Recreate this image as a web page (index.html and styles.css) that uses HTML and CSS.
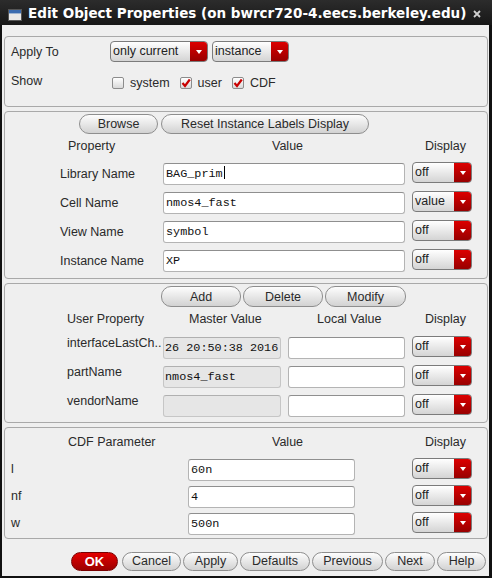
FILE: index.html
```html
<!DOCTYPE html>
<html>
<head>
<meta charset="utf-8">
<link rel="stylesheet" href="styles.css">
</head>
<body>
<div class="window">
  <div class="titlebar">
    <svg class="appicon" width="14" height="12" viewBox="0 0 14 12">
      <rect x="0.5" y="0.5" width="13" height="11" fill="#e8e8e8" stroke="#555"/>
      <rect x="1" y="1" width="12" height="3" fill="#3a6bb0"/>
      <rect x="1" y="4" width="12" height="1" fill="#9fb4d0"/>
    </svg>
    <span class="title">Edit Object Properties (on bwrcr720-4.eecs.berkeley.edu)</span>
    <svg class="close" width="8" height="8" viewBox="0 0 8 8">
      <path d="M1 1 L7 7 M7 1 L1 7" stroke="#d0d0d0" stroke-width="1.8"/>
    </svg>
  </div>
  <div class="content">
    <section class="group apply">
      <div class="arow">
        <span class="alabel">Apply To</span>
        <div class="combo w-current"><span class="ctext">only current</span><span class="carrow"></span></div>
        <div class="combo w-instance"><span class="ctext">instance</span><span class="carrow"></span></div>
      </div>
      <div class="arow showrow">
        <span class="alabel">Show</span>
        <span class="chk"><span class="box"></span>system</span>
        <span class="chk"><span class="box on"><svg width="10" height="10" viewBox="0 0 10 10"><path d="M1.5 5 L4 8 L8.8 1.5" fill="none" stroke="#c80000" stroke-width="2.2"/></svg></span>user</span>
        <span class="chk"><span class="box on"><svg width="10" height="10" viewBox="0 0 10 10"><path d="M1.5 5 L4 8 L8.8 1.5" fill="none" stroke="#c80000" stroke-width="2.2"/></svg></span>CDF</span>
      </div>
    </section>

    <section class="group props">
      <div class="btnrow btns-props">
        <button class="btn w-browse">Browse</button>
        <button class="btn w-reset">Reset Instance Labels Display</button>
      </div>
      <div class="grid grid-props">
        <div class="hdr h-prop">Property</div>
        <div class="hdr h-value">Value</div>
        <div class="hdr h-disp">Display</div>

        <div class="lbl l-prop">Library Name</div>
        <div class="field">BAG_prim<span class="caret"></span></div>
        <div class="combo"><span class="ctext">off</span><span class="carrow"></span></div>

        <div class="lbl l-prop">Cell Name</div>
        <div class="field">nmos4_fast</div>
        <div class="combo"><span class="ctext">value</span><span class="carrow"></span></div>

        <div class="lbl l-prop">View Name</div>
        <div class="field">symbol</div>
        <div class="combo"><span class="ctext">off</span><span class="carrow"></span></div>

        <div class="lbl l-prop">Instance Name</div>
        <div class="field">XP</div>
        <div class="combo"><span class="ctext">off</span><span class="carrow"></span></div>
      </div>
    </section>

    <section class="group user">
      <div class="btnrow btns-user">
        <button class="btn w-add">Add</button>
        <button class="btn w-del">Delete</button>
        <button class="btn w-mod">Modify</button>
      </div>
      <div class="grid grid-user">
        <div class="hdr h-uprop">User Property</div>
        <div class="hdr h-master">Master Value</div>
        <div class="hdr h-local">Local Value</div>
        <div class="hdr h-disp">Display</div>

        <div class="lbl l-user">interfaceLastCh..</div>
        <div class="field ro">26 20:50:38 2016</div>
        <div class="field"></div>
        <div class="combo"><span class="ctext">off</span><span class="carrow"></span></div>

        <div class="lbl l-user">partName</div>
        <div class="field ro">nmos4_fast</div>
        <div class="field"></div>
        <div class="combo"><span class="ctext">off</span><span class="carrow"></span></div>

        <div class="lbl l-user">vendorName</div>
        <div class="field ro"></div>
        <div class="field"></div>
        <div class="combo"><span class="ctext">off</span><span class="carrow"></span></div>
      </div>
    </section>

    <section class="group cdf">
      <div class="grid grid-cdf">
        <div class="hdr h-cdf">CDF Parameter</div>
        <div class="hdr h-cval">Value</div>
        <div></div>
        <div class="hdr h-disp">Display</div>

        <div class="lbl l-cdf">l</div>
        <div class="field">60n</div>
        <div></div>
        <div class="combo"><span class="ctext">off</span><span class="carrow"></span></div>

        <div class="lbl l-cdf">nf</div>
        <div class="field">4</div>
        <div></div>
        <div class="combo"><span class="ctext">off</span><span class="carrow"></span></div>

        <div class="lbl l-cdf">w</div>
        <div class="field">500n</div>
        <div></div>
        <div class="combo"><span class="ctext">off</span><span class="carrow"></span></div>
      </div>
    </section>

    <div class="footer">
      <button class="btn ok w-ok">OK</button>
      <button class="btn w-cancel">Cancel</button>
      <button class="btn w-apply">Apply</button>
      <button class="btn w-defaults">Defaults</button>
      <button class="btn w-prev">Previous</button>
      <button class="btn w-next">Next</button>
      <button class="btn w-help">Help</button>
    </div>
  </div>
</div>
</body>
</html>
```
FILE: styles.css
```css
* { box-sizing: border-box; margin: 0; padding: 0; }
html, body { margin: 0; }
body {
  width: 492px;
  height: 578px;
  overflow: hidden;
  background: #111;
  font-family: "Liberation Sans", Arial, sans-serif;
  font-size: 12.5px;
  color: #2a2a2a;
}
.window {
  width: 492px;
  height: 578px;
  display: flex;
  flex-direction: column;
  background: #111;
}
.titlebar {
  height: 25px;
  flex: none;
  display: flex;
  align-items: center;
  background: linear-gradient(#2c2c2c, #171717);
  color: #fff;
}
.appicon { margin-left: 8px; margin-top: 4px; flex: none; }
.title {
  margin-left: 6px;
  font-family: "DejaVu Sans", sans-serif;
  font-weight: bold;
  font-size: 13.5px;
  white-space: nowrap;
  letter-spacing: 0;
}
.close { margin-left: auto; margin-right: 11px; margin-top: 2px; }

.content {
  flex: 1;
  background: #efefef;
  margin: 0 3px 2px 2px;
  padding-top: 11px;
}
.group {
  margin: 0 1px 4px 2px;
  border: 1px solid #a9a9a9;
  border-radius: 4px;
}

/* apply section */
.apply { height: 71px; padding-top: 4px; }
.arow { display: flex; align-items: center; height: 21px; }
.showrow { margin-top: 14px; height: 13px; }
.alabel { width: 105px; padding-left: 6px; flex: none; }
.showrow .alabel { margin-top: -3px; }
.w-current { width: 98px; margin-right: 4px; }
.w-instance { width: 77px; }
.chk { display: flex; align-items: center; margin-right: 10px; padding-left: 2px; }
.chk + .chk { padding-left: 0; }
.box {
  width: 12px; height: 12px;
  border: 1px solid #8c8c8c;
  border-radius: 2px;
  background: linear-gradient(#ffffff, #d9d9d9);
  margin-right: 6px;
  display: flex; align-items: center; justify-content: center;
}
.box svg { display: block; }

/* combo */
.combo {
  display: flex;
  height: 21px;
  border: 1px solid #7b7b7b;
  border-radius: 4px;
  background: linear-gradient(#ffffff, #d4d4d4);
  overflow: hidden;
  color: #222;
}
.grid .combo { margin-top: -1px; }
.ctext { flex: 1; padding-left: 2px; line-height: 19px; white-space: nowrap; overflow: hidden; }
.carrow {
  width: 17px;
  flex: none;
  background: linear-gradient(#dc0000, #980000);
  display: flex; align-items: center; justify-content: center;
}
.carrow::after {
  content: "";
  width: 0; height: 0;
  border-left: 3.5px solid transparent;
  border-right: 3.5px solid transparent;
  border-top: 4px solid #fff;
}

/* buttons */
.btn {
  height: 20px;
  border: 1px solid #8e8e8e;
  border-radius: 10px;
  background: linear-gradient(#fdfdfd, #d2d2d2);
  font-family: "Liberation Sans", Arial, sans-serif;
  font-size: 12.5px;
  color: #2a2a2a;
  line-height: 18px;
  text-align: center;
  white-space: nowrap;
  flex: none;
}
.btnrow { display: flex; }
.btns-props { margin-top: 2px; padding-left: 74px; gap: 3px; }
.w-browse { width: 79px; }
.w-reset { width: 208px; }
.btns-user { margin-top: 2px; padding-left: 156px; gap: 2px; }
.btns-user .btn { height: 21px; }
.w-add { width: 80px; }
.w-del { width: 80px; }
.w-mod { width: 81px; }

/* grids */
.grid { display: grid; column-gap: 7px; }
.grid-props {
  grid-template-columns: 151px 242px 60px;
  grid-template-rows: 22px repeat(4, 22px);
  row-gap: 7px;
}
.props { padding-bottom: 6px; }
.grid-user {
  grid-template-columns: 151px 118px 117px 60px;
  grid-template-rows: 23px repeat(3, 22px);
  row-gap: 7px;
}
.user { padding-bottom: 5px; }
.grid-cdf {
  grid-template-columns: 176px 167px 43px 60px;
  grid-template-rows: 26px repeat(3, 22px);
  row-gap: 5px;
}
.cdf { padding-bottom: 3px; }

.hdr { line-height: 24px; white-space: nowrap; }
.grid-cdf .hdr { line-height: 29px; }
.h-prop { padding-left: 63px; }
.h-value { padding-left: 109px; }
.h-disp { padding-left: 13px; }
.h-uprop { padding-left: 62px; }
.h-master { padding-left: 26px; }
.h-local { padding-left: 29px; }
.h-cdf { padding-left: 63px; }
.h-cval { padding-left: 84px; }

.lbl { line-height: 20px; white-space: nowrap; overflow: hidden; }
.l-prop { padding-left: 55px; line-height: 22px; }
.l-user { padding-left: 62px; margin-right: -7px; line-height: 12px; padding-top: 0; }
.l-cdf { padding-left: 6px; line-height: 21px; }

.field {
  height: 22px;
  border: 1px solid #b4b4b4;
  border-top-color: #8f8f8f;
  border-radius: 3px;
  background: #fff;
  font-family: "Liberation Mono", "DejaVu Sans Mono", monospace;
  font-size: 11.8px;
  color: #111;
  padding-left: 2px;
  line-height: 20px;
  white-space: nowrap;
  overflow: hidden;
}
.field.ro { background: #e6e6e6; border-color: #c6c6c6; border-top-color: #b0b0b0; padding-left: 1px; }
.caret {
  display: inline-block;
  width: 1px;
  height: 13px;
  background: #000;
  vertical-align: -2px;
  margin-left: 1px;
}

/* footer */
.footer {
  display: flex;
  justify-content: flex-end;
  gap: 2px;
  margin-top: 13px;
  padding-right: 3px;
}
.footer .btn { height: 19px; line-height: 17px; }
.ok {
  background: linear-gradient(#e40000, #9c0000);
  border-color: #7a0000;
  color: #fff;
  font-weight: bold;
  font-size: 13px;
  margin-right: 2px;
}
.w-ok { width: 47px; }
.w-cancel { width: 59px; }
.w-apply { width: 55px; }
.w-defaults { width: 70px; }
.w-prev { width: 71px; }
.w-next { width: 50px; }
.w-help { width: 49px; }
```
